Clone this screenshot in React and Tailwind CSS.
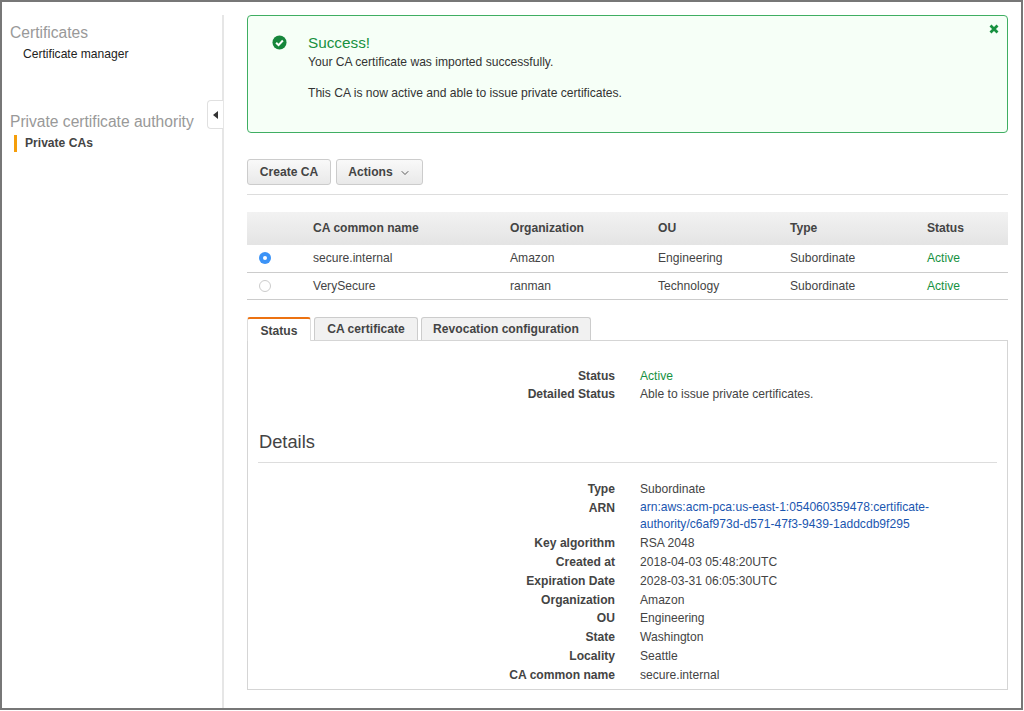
import { ChevronDown } from 'lucide-react'

const cas = [
  { name: 'secure.internal', org: 'Amazon', ou: 'Engineering', type: 'Subordinate', status: 'Active', selected: true },
  { name: 'VerySecure', org: 'ranman', ou: 'Technology', type: 'Subordinate', status: 'Active', selected: false },
]

const details = [
  ['Type', 'Subordinate'],
  ['ARN', null],
  ['Key algorithm', 'RSA 2048'],
  ['Created at', '2018-04-03 05:48:20UTC'],
  ['Expiration Date', '2028-03-31 06:05:30UTC'],
  ['Organization', 'Amazon'],
  ['OU', 'Engineering'],
  ['State', 'Washington'],
  ['Locality', 'Seattle'],
  ['CA common name', 'secure.internal'],
]

const CheckCircle = () => (
  <svg viewBox="0 0 16 16" className="h-[15px] w-[15px]">
    <circle cx="8" cy="8" r="7.5" fill="#16863b" />
    <path d="M4.4 8.2 L7 10.8 L11.6 5.9" fill="none" stroke="#fff" strokeWidth="2.2" />
  </svg>
)

const CloseIcon = () => (
  <svg viewBox="0 0 10 10" className="h-[10px] w-[10px]">
    <path d="M1.5 1.5 L8.5 8.5 M8.5 1.5 L1.5 8.5" stroke="#16913f" strokeWidth="2.8" />
  </svg>
)

const Row = ({ label, children }) => (
  <div className="flex">
    <div className="w-[357px] shrink-0 text-right font-bold text-[#444]">{label}</div>
    <div className="ml-[25px] text-[#444]">{children}</div>
  </div>
)

export default function App() {
  return (
    <div className="relative h-[711px] w-[1024px] overflow-hidden bg-white font-['Liberation_Sans',Arial,sans-serif] text-[12.1px] leading-[18.85px] text-[#444]">
      <div className="flex h-[710px] w-[1023px] border-2 border-[#777] pt-[13px]">
        {/* Sidebar */}
        <aside className="relative w-[222px] shrink-0 border-r-2 border-[#e6e6e6]">
          <div className="pl-[8px] pt-[9px] text-[15.6px] leading-[18px] text-[#999]">Certificates</div>
          <div className="pl-[21px] pt-[3px] text-[#222]">Certificate manager</div>
          <div className="pl-[8px] pt-[49px] text-[15.6px] leading-[18px] text-[#999]">Private certificate authority</div>
          <div className="ml-[12px] mt-[4px] border-l-[3px] border-[#f59e0b] pl-[8px] font-bold leading-[17px] text-[#444]">Private CAs</div>
          <button className="absolute right-[-1px] top-[85px] flex h-[29px] w-[16px] items-center justify-center rounded-l-[4px] border border-r-0 border-[#e0e0e0] bg-white">
            <span className="h-0 w-0 border-y-[4px] border-r-[5px] border-y-transparent border-r-[#333]" />
          </button>
        </aside>

        {/* Main */}
        <main className="ml-[23px] w-[761px]">
          <div className="relative h-[118px] rounded-[4px] border border-[#3fae62] bg-[#f6fff7] pl-[60px] pt-[18px]">
            <span className="absolute left-[24px] top-[19px]"><CheckCircle /></span>
            <button className="absolute right-[8px] top-[8px] flex"><CloseIcon /></button>
            <div className="text-[15.3px] leading-[18px] text-[#16913f]">Success!</div>
            <div className="mt-[2px] leading-[16px] text-[#333]">Your CA certificate was imported successfully.</div>
            <div className="mt-[15px] leading-[16px] text-[#333]">This CA is now active and able to issue private certificates.</div>
          </div>

          <div className="mt-[26px] flex gap-[5px] border-b border-[#ddd] pb-[9px]">
            <button className="h-[26px] w-[84px] rounded-[3px] border border-[#ccc] bg-gradient-to-b from-[#f9f9f9] to-[#e9e9e9] pt-[1px] font-bold text-[#444]">Create CA</button>
            <button className="flex h-[26px] w-[87px] items-center justify-center gap-[6px] rounded-[3px] border border-[#ccc] bg-gradient-to-b from-[#f9f9f9] to-[#e9e9e9] pt-[1px] font-bold text-[#444]">
              Actions
              <ChevronDown className="h-[12px] w-[12px]" strokeWidth={1.75} />
            </button>
          </div>

          <table className="mt-[17px] w-full table-fixed border-collapse">
            <thead>
              <tr className="h-[33px] bg-gradient-to-b from-[#f2f2f2] to-[#e4e4e4] text-left font-bold text-[#444]">
                <th className="w-[66px]" />
                <th className="w-[197px] font-bold">CA common name</th>
                <th className="w-[148px] font-bold">Organization</th>
                <th className="w-[132px] font-bold">OU</th>
                <th className="w-[137px] font-bold">Type</th>
                <th className="font-bold">Status</th>
              </tr>
            </thead>
            <tbody>
              {cas.map((ca) => (
                <tr key={ca.name} className="h-[27px] border-b border-[#ccc]">
                  <td className="pl-[12px]">
                    {ca.selected ? (
                      <span className="flex h-[12px] w-[12px] items-center justify-center rounded-full bg-[#3b93f7]">
                        <span className="h-[4px] w-[4px] rounded-full bg-white" />
                      </span>
                    ) : (
                      <span className="block h-[12px] w-[12px] rounded-full border border-[#ccc] bg-white" />
                    )}
                  </td>
                  <td className="pt-[1px]">{ca.name}</td>
                  <td className="pt-[1px]">{ca.org}</td>
                  <td className="pt-[1px]">{ca.ou}</td>
                  <td className="pt-[1px]">{ca.type}</td>
                  <td className="pt-[1px] text-[#16913f]">{ca.status}</td>
                </tr>
              ))}
            </tbody>
          </table>

          <div className="mt-[17px] flex items-end gap-[3px] font-bold text-[#444]">
            <div className="relative z-10 mb-[-1px] flex h-[24px] w-[64px] items-center justify-center rounded-t-[3px] border-x border-t-2 border-x-[#ddd] border-t-[#ec7211] bg-white pt-[3px]">Status</div>
            <div className="flex h-[23px] w-[104px] items-center justify-center rounded-t-[3px] border-x border-t border-[#ccc] bg-[#f1f1f1] pt-[1px]">CA certificate</div>
            <div className="flex h-[23px] w-[170px] items-center justify-center rounded-t-[3px] border-x border-t border-[#ccc] bg-[#f1f1f1] pt-[1px]">Revocation configuration</div>
          </div>

          <div className="h-[350px] border border-[#d5d5d5] px-[10px] pt-[26px]">
            <Row label="Status"><span className="text-[#16913f]">Active</span></Row>
            <Row label="Detailed Status">Able to issue private certificates.</Row>
            <div className="mt-[27px] border-b border-[#ddd] pb-[9px] pl-[1px] text-[18.3px] leading-[22px] text-[#444]">Details</div>
            <div className="pt-[17px]">
              {details.map(([label, value]) => (
                <Row key={label} label={label}>
                  {value ?? (
                    <span className="block w-[310px] pb-[1px] leading-[17px] text-[#1a56b0]">
                      arn:aws:acm-pca:us-east-1:054060359478:certificate-authority/c6af973d-d571-47f3-9439-1addcdb9f295
                    </span>
                  )}
                </Row>
              ))}
            </div>
          </div>
        </main>
      </div>
    </div>
  )
}
